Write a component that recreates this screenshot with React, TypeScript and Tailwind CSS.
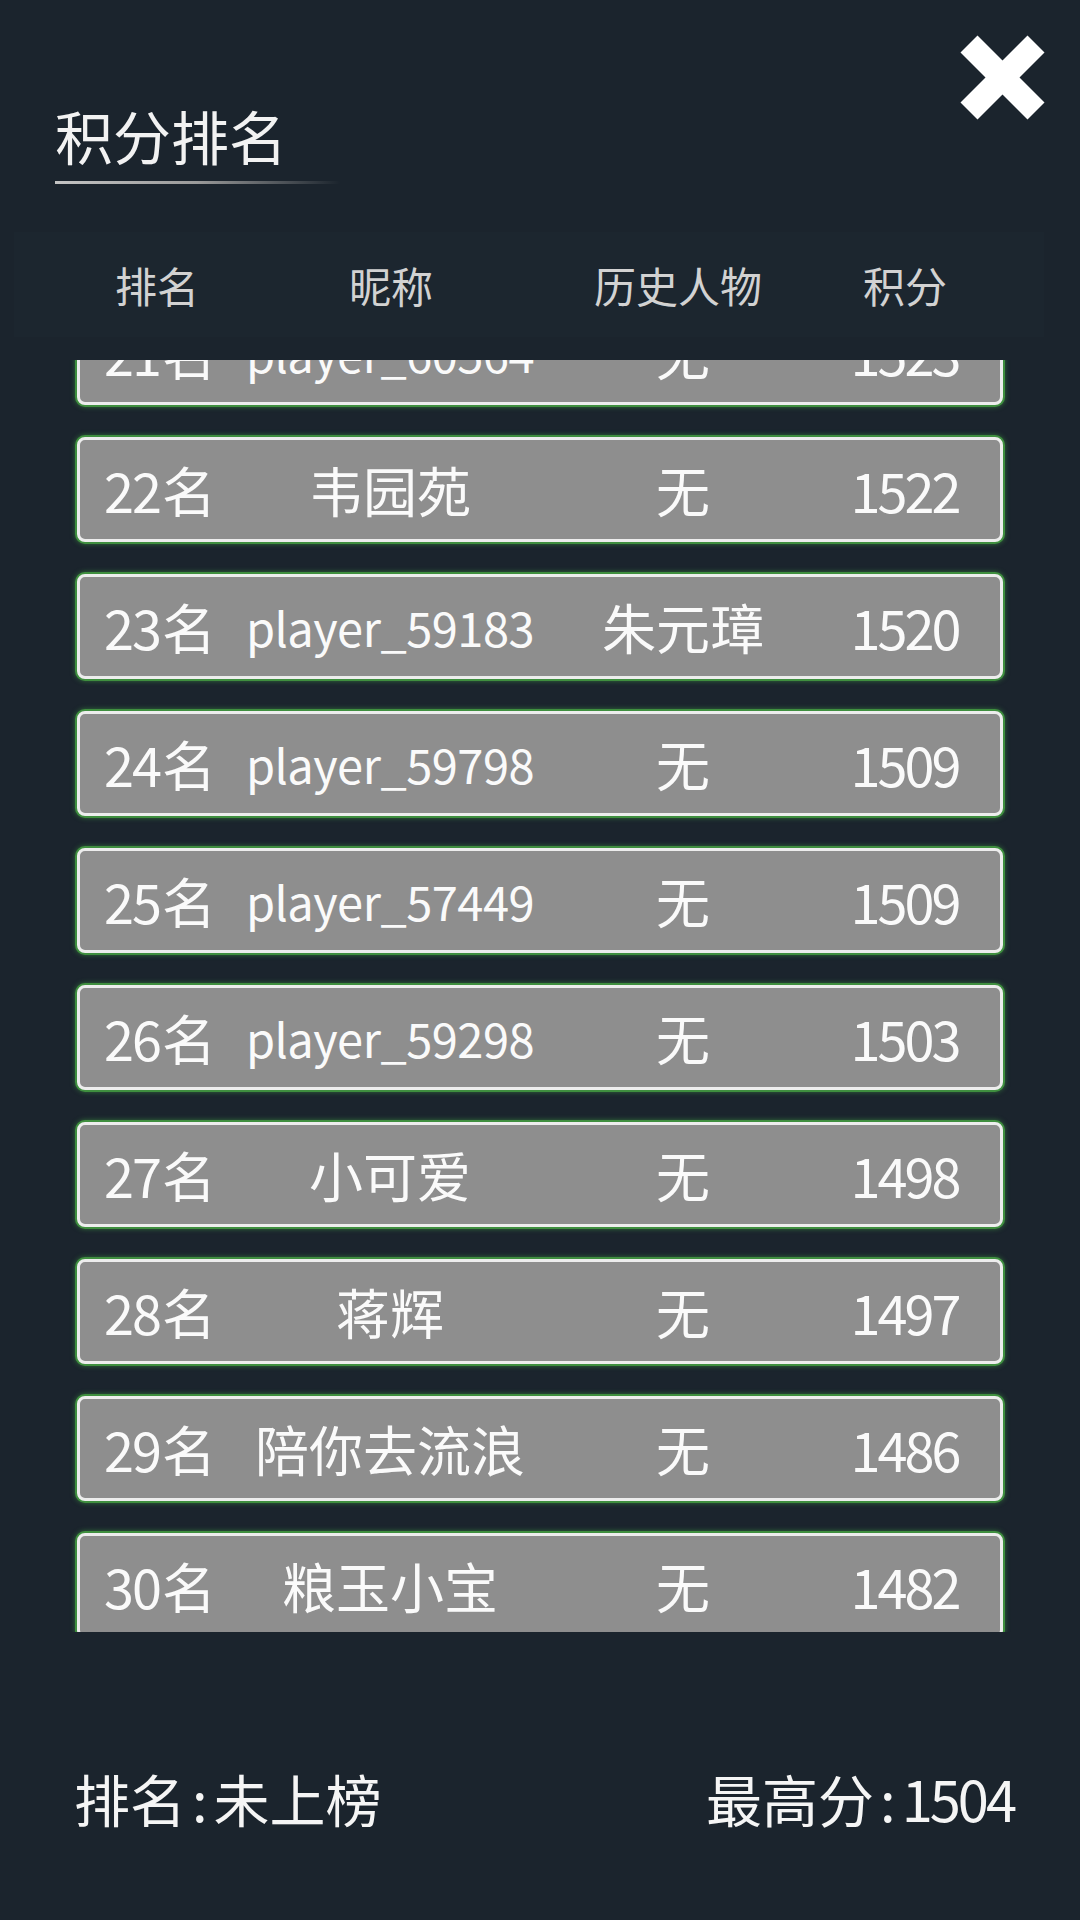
import React from "react";

type Row = { rank: number; name: string; hero: string; score: string };

const rows: Row[] = [
  { rank: 21, name: "player_60564", hero: "无", score: "1523" },
  { rank: 22, name: "韦园苑", hero: "无", score: "1522" },
  { rank: 23, name: "player_59183", hero: "朱元璋", score: "1520" },
  { rank: 24, name: "player_59798", hero: "无", score: "1509" },
  { rank: 25, name: "player_57449", hero: "无", score: "1509" },
  { rank: 26, name: "player_59298", hero: "无", score: "1503" },
  { rank: 27, name: "小可爱", hero: "无", score: "1498" },
  { rank: 28, name: "蒋辉", hero: "无", score: "1497" },
  { rank: 29, name: "陪你去流浪", hero: "无", score: "1486" },
  { rank: 30, name: "粮玉小宝", hero: "无", score: "1482" },
];

function CloseIcon() {
  return (
    <svg width="85" height="85" viewBox="0 0 85 85" className="shrink-0">
      <line x1="9" y1="9" x2="76" y2="76" stroke="#ffffff" strokeWidth="24" strokeLinecap="butt" />
      <line x1="76" y1="9" x2="9" y2="76" stroke="#ffffff" strokeWidth="24" strokeLinecap="butt" />
    </svg>
  );
}

function RankRow({ r }: { r: Row }) {
  const isPlayer = r.name.startsWith("player_");
  return (
    <div className="h-[105px] shrink-0 rounded-[8px] border-[3px] border-[#ededed] bg-[#8e8e8e] shadow-[0_0_0_2px_#3f8f3f,0_0_5px_2px_rgba(70,170,70,0.55)] flex items-center text-[#fafafa] text-[54px] leading-none">
      <div className="w-[154px] flex justify-center whitespace-nowrap pl-[6px]">
        <span className="tracking-[-2px] mr-[2px]">{r.rank}</span>名
      </div>
      <div className="w-[312px] flex justify-center whitespace-nowrap">
        {isPlayer ? (
          <span className="text-[47px] tracking-[-0.5px]">{r.name}</span>
        ) : (
          <span>{r.name}</span>
        )}
      </div>
      <div className="w-[274px] flex justify-center whitespace-nowrap">{r.hero}</div>
      <div className="w-[172px] flex justify-center whitespace-nowrap">
        <span className="tracking-[-3px] pr-[3px]">{r.score}</span>
      </div>
    </div>
  );
}

export default function App() {
  return (
    <div className="w-[1080px] h-[1920px] overflow-hidden bg-[#1b242d] font-['Noto_Sans_CJK_SC',sans-serif]">
      <div className="flex justify-between items-start pl-[55px] pr-[35px] pt-[35px]">
        <div className="mt-[71px] flex flex-col">
          <div className="text-[58px] leading-none text-[#f2f2f2] whitespace-nowrap">积分排名</div>
          <div className="mt-[17px] h-[3px] w-[285px] bg-gradient-to-r from-[#c4c4c4] via-[#9a9a9a] to-transparent" />
        </div>
        <CloseIcon />
      </div>

      <div className="mt-[48px] ml-[14px] w-[1030px] h-[105px] bg-[#1c262f] flex items-center pl-[40px] text-[42px] leading-none text-[#d2d2d2]">
        <div className="w-[206px] flex justify-center whitespace-nowrap">排名</div>
        <div className="w-[262px] flex justify-center whitespace-nowrap">昵称</div>
        <div className="w-[312px] flex justify-center whitespace-nowrap">历史人物</div>
        <div className="w-[142px] flex justify-center whitespace-nowrap">积分</div>
      </div>

      <div className="mt-[23px] h-[1272px] overflow-hidden">
        <div className="mt-[-60px] ml-[77px] w-[926px] flex flex-col gap-[32px]">
          {rows.map((r) => (
            <RankRow key={r.rank} r={r} />
          ))}
        </div>
      </div>

      <div className="mt-[138px] flex justify-between pl-[74px] pr-[66px] text-[56px] leading-none text-[#f5f5f5]">
        <div className="whitespace-nowrap">
          排名<span className="px-[6px]">:</span>未上榜
        </div>
        <div className="whitespace-nowrap">
          最高分<span className="px-[6px]">:</span>
          <span className="tracking-[-3px]">1504</span>
        </div>
      </div>
    </div>
  );
}
